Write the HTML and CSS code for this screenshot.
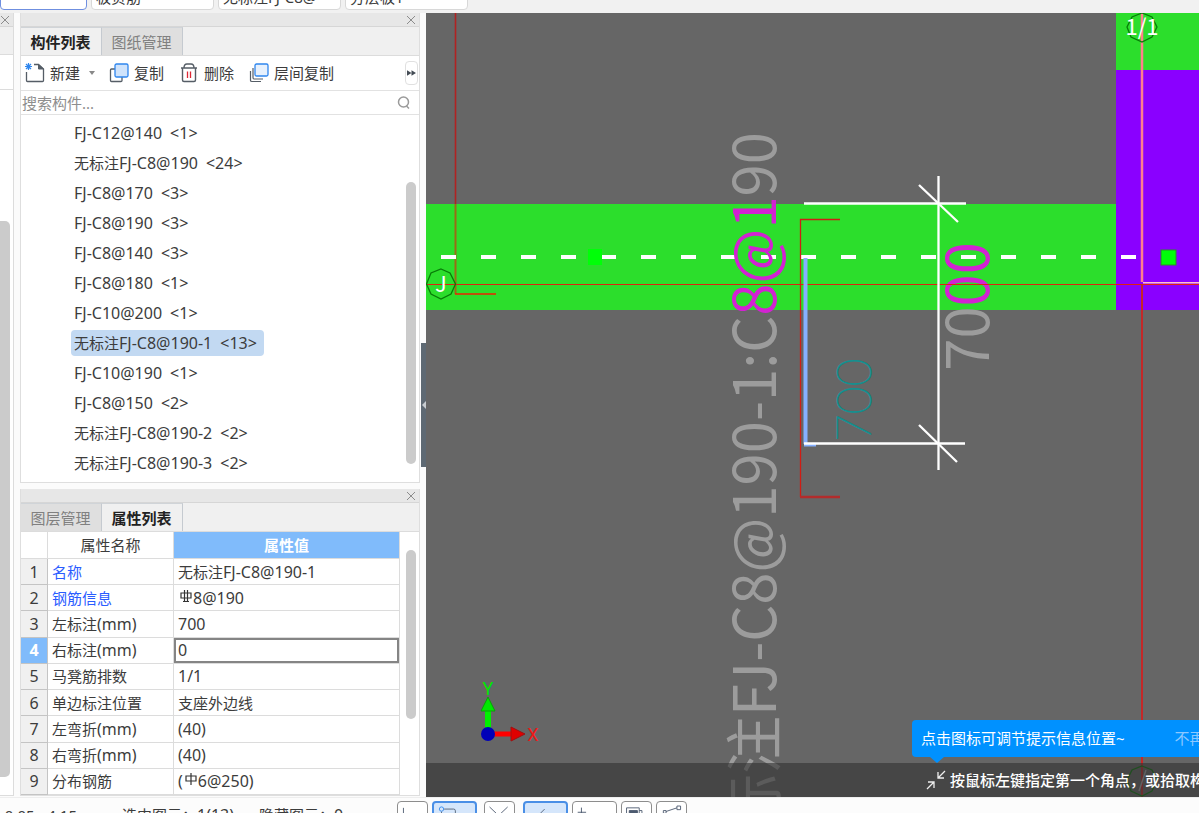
FILE: index.html
```html
<!DOCTYPE html>
<html lang="zh-CN">
<head>
<meta charset="utf-8">
<title>构件列表</title>
<link rel="stylesheet" href="styles.css">
</head>
<body>
<header class="selectors">
  <select class="picker picker-active" aria-label="楼层"><option></option></select>
  <select class="picker" aria-label="构件类型"><option>板负筋</option></select>
  <select class="picker" aria-label="构件"><option>无标注FJ-C8@</option></select>
  <select class="picker" aria-label="分层"><option>分层板1</option></select>
</header>
<main class="workspace">
  <aside class="nav-stub">
    <div class="panel-title"><button class="close" aria-label="关闭导航"><svg viewBox="0 0 10 10"><path d="M1 1L9 9M9 1L1 9"/></svg></button></div>
    <div class="nav-tabs"></div>
    <div class="nav-tools"></div>
    <div class="nav-body"><div class="thumb nav-thumb"></div></div>
  </aside>
  <div class="docks">
    <section class="panel components">
      <div class="panel-title"><button class="close" aria-label="关闭构件列表"><svg viewBox="0 0 10 10"><path d="M1 1L9 9M9 1L1 9"/></svg></button></div>
      <div class="tabs"><button class="tab current">构件列表</button><button class="tab">图纸管理</button></div>
      <div class="toolbar">
        <button class="tool tool-new">
          <svg viewBox="0 0 20 20" fill="none"><path d="M1.500 9V17.500Q1.500 18.500 2.500 18.500H17.500Q18.500 18.500 18.500 17.500V6L13.500 1.500H9" stroke="#555d66" stroke-width="1.300"/><path d="M13.500 1.500V6H18.500Z" fill="#555d66" stroke="#555d66"/><path d="M0 3.500H7M3.500 0V7M1 1L6 6M6 1L1 6" stroke="#2f86ee" stroke-width="1.200"/></svg>
          新建<span class="caret"></span></button>
        <button class="tool">
          <svg viewBox="0 0 20 20" fill="none"><path d="M6 6H2.500Q1.500 6 1.500 7V17.500Q1.500 18.500 2.500 18.500H12Q13 18.500 13 17.500V14" stroke="#555d66" stroke-width="1.300"/><rect x="6" y="1" width="13" height="13" rx="1.500" fill="#cfe3fb" stroke="#2f86ee" stroke-width="1.300"/></svg>
          复制</button>
        <button class="tool">
          <svg viewBox="0 0 20 20" fill="none"><path d="M2 5H18M5 5Q5 1 8 1H12Q15 1 15 5M3.500 5V17Q3.500 18.500 5 18.500H15Q16.500 18.500 16.500 17V5" stroke="#555d66" stroke-width="1.400"/><path d="M8.500 8.500V15M11.500 8.500V15" stroke="#dd2735" stroke-width="1.300"/></svg>
          删除</button>
        <button class="tool">
          <svg viewBox="0 0 20 20" fill="none"><path d="M1.500 8V17.500Q1.500 18.500 3 18.500H12M4 5V14.500Q4 16 5 16H14" stroke="#555d66" stroke-width="1.200"/><rect x="6" y="1" width="13" height="12" rx="1.500" fill="#e7f1fd" stroke="#2f86ee" stroke-width="1.300"/></svg>
          层间复制</button>
        <button class="more" aria-label="更多"><svg viewBox="0 0 10 8"><path d="M0 1L5 4L0 7ZM5 1L10 4L5 7Z"/></svg></button>
      </div>
      <label class="search"><input type="text" placeholder="搜索构件..." aria-label="搜索构件"><svg viewBox="0 0 14 14"><circle cx="6.500" cy="6" r="5"/><path d="M9.500 10L12 12.500"/></svg></label>
      <div class="list-area">
        <ul class="list">
          <li><span><b>FJ-C12@140</b><b class="count">&lt;1&gt;</b></span></li>
          <li><span>无标注<b>FJ-C8@190</b><b class="count">&lt;24&gt;</b></span></li>
          <li><span><b>FJ-C8@170</b><b class="count">&lt;3&gt;</b></span></li>
          <li><span><b>FJ-C8@190</b><b class="count">&lt;3&gt;</b></span></li>
          <li><span><b>FJ-C8@140</b><b class="count">&lt;3&gt;</b></span></li>
          <li><span><b>FJ-C8@180</b><b class="count">&lt;1&gt;</b></span></li>
          <li><span><b>FJ-C10@200</b><b class="count">&lt;1&gt;</b></span></li>
          <li><span class="selected">无标注<b>FJ-C8@190-1</b><b class="count">&lt;13&gt;</b></span></li>
          <li><span><b>FJ-C10@190</b><b class="count">&lt;1&gt;</b></span></li>
          <li><span><b>FJ-C8@150</b><b class="count">&lt;2&gt;</b></span></li>
          <li><span>无标注<b>FJ-C8@190-2</b><b class="count">&lt;2&gt;</b></span></li>
          <li><span>无标注<b>FJ-C8@190-3</b><b class="count">&lt;2&gt;</b></span></li>
        </ul>
        <div class="track list-track"><div class="thumb"></div></div>
      </div>
    </section>
    <section class="panel properties">
      <div class="panel-title"><button class="close" aria-label="关闭属性列表"><svg viewBox="0 0 10 10"><path d="M1 1L9 9M9 1L1 9"/></svg></button></div>
      <div class="tabs"><button class="tab">图层管理</button><button class="tab current">属性列表</button></div>
      <div class="table-area">
        <table class="props">
          <colgroup><col class="col-no"><col class="col-name"><col></colgroup>
          <thead><tr><th></th><th>属性名称</th><th class="value-head">属性值</th></tr></thead>
          <tbody>
            <tr><th>1</th><td class="key">名称</td><td>无标注<b>FJ-C8@190-1</b></td></tr>
            <tr><th>2</th><td class="key">钢筋信息</td><td><svg class="rebar" viewBox="0 0 12 13"><path d="M4.500 0V12M7.500 0V12M1 3H11V8H1ZM3 11.500H9"/></svg><b>8@190</b></td></tr>
            <tr><th>3</th><td>左标注<b>(mm)</b></td><td><b>700</b></td></tr>
            <tr class="editing"><th>4</th><td>右标注<b>(mm)</b></td><td class="edit-cell"><input type="text" value="0" aria-label="右标注(mm)"></td></tr>
            <tr><th>5</th><td>马凳筋排数</td><td><b>1/1</b></td></tr>
            <tr><th>6</th><td>单边标注位置</td><td>支座外边线</td></tr>
            <tr><th>7</th><td>左弯折<b>(mm)</b></td><td><b>(40)</b></td></tr>
            <tr><th>8</th><td>右弯折<b>(mm)</b></td><td><b>(40)</b></td></tr>
            <tr><th>9</th><td>分布钢筋</td><td><b>(</b><svg class="rebar" viewBox="0 0 12 13"><path d="M6 0V12M1 3H11V8H1Z"/></svg><b>6@250)</b></td></tr>
          </tbody>
        </table>
        <div class="track props-track"><div class="thumb"></div></div>
      </div>
    </section>
  </div>
  <div class="splitter"><button class="collapse" aria-label="收起面板"></button></div>
  <section class="canvas">
    <svg class="drawing" role="img" aria-label="板负筋平面图">
      <g transform="translate(-426 -13)" fill="none">
        <rect x="426" y="204" width="690" height="106" fill="#2cde2c"/>
        <rect x="1116" y="0" width="2000" height="70" fill="#2cde2c"/>
        <rect x="1116" y="70" width="2000" height="240" fill="#8a00ff"/>
        <path d="M455.500 0V204" stroke="#b02222" stroke-width="1.600"/>
        <path d="M455.500 204V294" stroke="#986c16" stroke-width="2"/>
        <path d="M455 294H496" stroke="#ee2200" stroke-width="1.500"/>
        <path d="M441 257H1137" stroke="#fff" stroke-width="4" stroke-dasharray="15 25"/>
        <rect x="588" y="249" width="14" height="16" fill="#00ff08"/>
        <rect x="1161" y="250" width="15" height="15" fill="#00ff08" stroke="#2b8f2b"/>
        <g class="cad-text">
          <text transform="translate(776 132) rotate(-90)" text-anchor="end">无标注FJ-C8@190-1:C<tspan class="picked">8@1</tspan>90</text>
          <text transform="translate(989 242) rotate(-90)" text-anchor="end">70<tspan class="picked">00</tspan></text>
        </g>
        <path d="M426 284.500H3000" stroke="#e02010"/>
        <path d="M1142 13V282" stroke="#ff7f8c" stroke-width="2.500"/>
        <path d="M1143 282.800H3000" stroke="#ffc0c8" stroke-width="1.500"/>
        <path d="M1142 284V3000" stroke="#c42828" stroke-width="2"/>
        <path d="M840 219.500H800.500V497" stroke="#d01c14" stroke-width="1.300"/>
        <path d="M800 497H840" stroke="#b22c2c" stroke-width="2.500"/>
        <path d="M805.500 258V444" stroke="#86b0ff" stroke-width="4"/>
        <path d="M804 445H816" stroke="#86b0ff" stroke-width="3"/>
        <path d="M804 203.500H966M804 443.500H965M938.500 176V470" stroke="#fff" stroke-width="2.300"/>
        <path d="M919 185L958 222M919 425L957 462" stroke="#fff" stroke-width="2.300"/>
        <text class="dim" transform="translate(871 442) rotate(-90)">700</text>
        <path d="M441 269L450 273L455.500 284L451 294L441 299L431 294L426.500 284L431 273Z" stroke="#087c08" stroke-width="1.300"/>
        <path d="M1142 13L1152 17L1157 27L1152 37L1142 42L1131 37L1127 27L1132 17Z" stroke="#087c08" stroke-width="1.300"/>
        <path d="M1142 766L1152 770L1157 780L1152 791L1142 796L1131 791L1127 780L1132 770Z" stroke="#087c08" stroke-width="1.300"/>
        <text class="axis" x="441" y="292">J</text>
        <text class="axis" x="1142" y="35">1/1</text>
        <path d="M1139 791L1146 770" stroke="#aaa" stroke-width="1.500"/>
        <path d="M488 728V708" stroke="#00f000" stroke-width="6"/>
        <path d="M481 711L488 697L495 711Z" fill="#00e800" stroke="#08a008"/>
        <path d="M494 734H512" stroke="#f00" stroke-width="5"/>
        <path d="M511 727L525 734L511 741Z" fill="#e00000" stroke="#a01010"/>
        <circle cx="488" cy="734" r="7" fill="#0000b8"/>
        <text class="ucs" x="488" y="695" fill="#00e800">Y</text>
        <text class="ucs" x="533" y="741" fill="#f01818">X</text>
      </g>
    </svg>
    <div class="tip"><span>点击图标可调节提示信息位置~</span><a href="#">不再提示</a></div>
    <div class="prompt"><svg viewBox="0 0 20 20"><path d="M19 1L12 8M12 2V8H18M1 19L8 12M2 12H8V18"/></svg><span>按鼠标左键指定第一个角点，或拾取构件</span></div>
  </section>
</main>
<footer class="status">
  <span class="coords">-0.05&nbsp; -4.15</span>
  <span class="picked-count">选中图元：<b>1(13)</b></span>
  <span class="hidden-count">隐藏图元：<b>0</b></span>
  <div class="modes">
    <button class="mode" aria-label="正交"><svg viewBox="0 0 32 30"><path d="M6 6V20H24"/></svg></button>
    <button class="mode large on" aria-label="对象捕捉"><svg viewBox="0 0 46 30"><circle cx="8" cy="7" r="2.500" class="blue"/><path d="M11 7H22Q24 7 24 9V20M8 10V20"/></svg></button>
    <button class="mode cross" aria-label="交点"><svg viewBox="0 0 32 30"><path d="M5 5L25 24M25 5L5 24"/></svg></button>
    <button class="mode large on" aria-label="垂点"><svg viewBox="0 0 46 30"><path d="M22 7L10 19"/></svg></button>
    <button class="mode large" aria-label="中点"><svg viewBox="0 0 46 30"><path d="M9 6V18M5 11H14"/></svg></button>
    <button class="mode" aria-label="顶点"><svg viewBox="0 0 32 30"><path d="M5 24V6H19V24M19 9H22V24"/><path class="solid" d="M8 9H17V24H8Z"/></svg></button>
    <button class="mode" aria-label="坐标"><svg viewBox="0 0 32 30"><path d="M10 10L22 6M8 12V20M7 9H10V12H7ZM22 4H26V8H22Z"/></svg></button>
  </div>
</footer>
</body>
</html>
```
FILE: styles.css
```css
* { box-sizing: border-box; }
body {
  margin: 0;
  height: 100vh;
  display: flex;
  flex-direction: column;
  overflow: hidden;
  background: #fcfcfc;
  color: #3c3c3c;
  font: 15px/20px "Noto Sans", "Noto Sans CJK SC", sans-serif;
}
button, input, select { font: inherit; color: inherit; margin: 0; padding: 0; border: 0; background: none; }
b { font-size: 16px; font-weight: 400; }
svg { display: block; }

.selectors {
  flex: none;
  height: 13px;
  padding-bottom: 3px;
  display: flex;
  align-items: flex-end;
  gap: 4px;
  background: #f1f1f1;
}
.picker {
  appearance: none;
  flex: none;
  width: 123px;
  height: 26px;
  padding: 0 4px;
  border: 1px solid #d8d8d8;
  border-radius: 4px;
  background: #fff;
}
.picker-active { width: 87px; border-color: #6f8fe0; }

.workspace { flex: 1; min-height: 0; display: flex; background: #fbfbfb; }
.panel-title {
  flex: none;
  height: 14px;
  display: flex;
  justify-content: flex-end;
  align-items: center;
  background: #e7e7e7;
  border-bottom: 1px solid #d6d6d6;
}
.close { width: 10px; height: 10px; margin-right: 3px; }
.close svg { stroke: #8c8c8c; fill: none; }

.nav-stub {
  flex: none;
  width: 14px;
  margin-bottom: 1px;
  display: flex;
  flex-direction: column;
  border-right: 1px solid #dcdcdc;
  border-bottom: 1px solid #dcdcdc;
  background: #fff;
}
.nav-tabs { height: 28px; background: #f0f0f0; border-bottom: 1px solid #dcdcdc; }
.nav-tools { height: 35px; border-bottom: 1px solid #dcdcdc; }
.nav-body { flex: 1; padding: 131px 3px 18px 0; display: flex; }
.thumb { background: #cbcbcb; border-radius: 5px; }
.nav-thumb { width: 10px; border-radius: 0 5px 5px 0; }

.docks { flex: none; width: 400px; margin: 0 1px 1px 6px; display: flex; flex-direction: column; gap: 6px; }
.panel { display: flex; flex-direction: column; border: 1px solid #dedede; border-top: 0; background: #fff; }
.components { flex: 1; min-height: 0; }
.tabs { height: 29px; display: flex; background: #f0f0f0; border-bottom: 1px solid #dcdcdc; }
.tab {
  width: 81px;
  padding-right: 1px;
  border-right: 1px solid #c5cad0;
  border-top: 1px solid #d0d4d8;
  background: #dfdfdf;
  color: #808080;
}
.tab.current { background: #f0f0f0; color: #222; font-weight: 700; }
.toolbar { height: 35px; padding: 0 1px 0 4px; display: flex; align-items: center; border-bottom: 1px solid #e2e2e2; }
.tool { display: flex; align-items: center; gap: 5px; white-space: nowrap; margin-right: 15px; }
.tool svg { width: 20px; height: 20px; }
.tool-new { margin-right: 14px; }
.caret { border: 3px solid transparent; border-top: 4px solid #888; border-bottom: 0; margin-left: 4px; }
.more { margin-left: auto; width: 13px; height: 24px; border: 1px solid #e0e0e0; border-radius: 4px; display: flex; align-items: center; justify-content: center; }
.more svg { width: 9px; height: 8px; flex: none; fill: #444c55; }
.search { height: 24px; padding: 0 8px 0 1px; display: flex; align-items: center; border-bottom: 1px solid #e2e2e2; }
.search input { flex: 1; min-width: 0; outline: 0; height: 22px; }
.search input::placeholder { color: #8e8e8e; opacity: 1; }
.search svg { width: 14px; height: 14px; fill: none; stroke: #9a9a9a; stroke-width: 1.500; }

.list-area { flex: 1; min-height: 0; display: flex; }
.list { flex: 1; list-style: none; margin: 0; padding: 3px 0 0 50px; overflow: hidden; }
.list li { height: 30px; display: flex; align-items: center; }
.list span { padding: 0 7px 0 3px; height: 26px; line-height: 26px; border-radius: 4px; white-space: nowrap; }
.list .selected { background: #c2d9f2; }
.count { margin-left: 8px; }
.track { width: 19px; padding: 0 3px 0 6px; display: flex; }
.track .thumb { flex: 1; }
.list-track { padding-top: 67px; padding-bottom: 18px; }

.table-area { display: flex; }
.props { flex: 1; height: 263px; border-collapse: separate; border-spacing: 0; table-layout: fixed; }
.col-no { width: 27px; }
.col-name { width: 126px; }
.props tr { height: 26px; }
.props thead tr { height: 27px; }
.props th, .props td { padding: 0; border: 0 solid #dcdcdc; border-width: 0 1px 1px 0; line-height: 20px; font-weight: 400; text-align: center; white-space: nowrap; }
.props td { padding: 0 0 0 4px; text-align: left; }
.props tbody th { background: #f0f0f0; font-size: 16px; border-color: #c4c4c4; }
.props thead .value-head { background: #80bbfb; color: #fff; font-weight: 700; }
.props .key { color: #2a5cff; }
.props tbody .editing th { background: #80bbfb; color: #fff; font-weight: 700; }
.props .edit-cell { padding: 0; }
.edit-cell input { display: block; width: 100%; height: 25px; padding-left: 2px; border: 2px solid #858585; outline: 0; font-size: 16px; }
.rebar { display: inline-block; width: 12px; height: 13px; margin: 0 1px 0 2px; vertical-align: 1px; fill: none; stroke: #333; stroke-width: 1.200; }
.props-track { padding-top: 18px; padding-bottom: 76px; }

.splitter { flex: none; width: 5px; display: flex; align-items: center; }
.collapse { width: 5px; height: 124px; background: #5e6973; display: flex; align-items: center; justify-content: flex-end; }
.collapse::after { content: ""; border: 4px solid transparent; border-right-color: #c8ccd0; border-left: 0; }

.canvas { flex: 1; min-width: 0; position: relative; overflow: hidden; background: #666; }
.drawing { width: 100%; height: 100%; }
.cad-text { font: 58px "Noto Sans CJK SC", sans-serif; fill: #9c9c9c; }
.cad-text .picked { fill: #d222d2; }
.dim { font: 100 48px Lato, sans-serif; fill: #139090; stroke: #139090; }
.axis { font: 22px "Noto Sans CJK SC", sans-serif; fill: #fff; text-anchor: middle; }
.ucs { font: 18px Roboto, sans-serif; text-anchor: middle; }
.tip {
  position: absolute;
  left: 486px;
  right: -60px;
  bottom: 40px;
  height: 37px;
  padding: 0 9px 2px;
  display: flex;
  align-items: center;
  gap: 50px;
  border-radius: 4px;
  background: #0091ff;
  color: #fff;
  white-space: nowrap;
}
.tip::after { content: ""; position: absolute; left: 18px; top: 100%; border: 7px solid transparent; border-top: 6px solid #0091ff; border-bottom: 0; }
.tip a { color: #8cc8ff; text-decoration: none; }
.prompt {
  position: absolute;
  left: 0;
  right: 0;
  bottom: 0;
  height: 34px;
  padding-left: 500px;
  display: flex;
  align-items: center;
  gap: 4px;
  overflow: hidden;
  background: rgba(48, 48, 48, .6);
  color: #fff;
  font-weight: 500;
  white-space: nowrap;
}
.prompt svg { flex: none; width: 20px; height: 20px; fill: none; stroke: #eee; stroke-width: 1.300; }

.status { flex: none; height: 16px; padding-top: 3px; display: flex; align-items: flex-start; overflow: hidden; background: #fcfcfc; border-top: 1px solid #eee; white-space: nowrap; }
.status span { line-height: 28px; }
.coords { width: 122px; }
.picked-count { width: 137px; }
.hidden-count { width: 138px; }
.modes { display: flex; gap: 4px; }
.mode { flex: none; width: 31px; height: 30px; border: 1px solid #8d8d8d; border-radius: 4px; background: #fff; overflow: hidden; }
.mode.large { width: 45px; }
.mode.on { border: 2px solid #4a8fe6; background: #d5e6fb; }
.mode.cross { margin: 0 4px 0 3px; }
.mode svg { width: 100%; height: 100%; fill: none; stroke: #4d5b70; }
.mode .blue { stroke: #2f86ee; }
.mode .solid { fill: #4d5b70; }
```
